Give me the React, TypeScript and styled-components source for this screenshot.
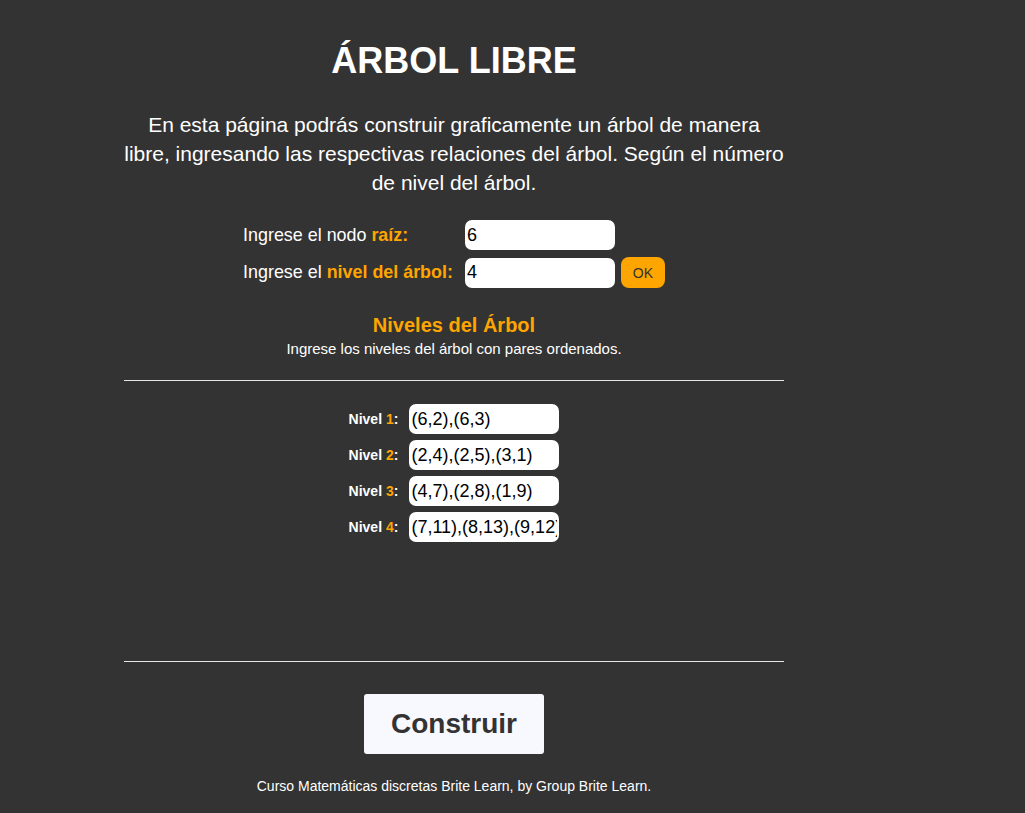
import React from 'react';
import styled, { createGlobalStyle } from 'styled-components';

const GlobalStyle = createGlobalStyle`
  html, body {
    margin: 0;
    padding: 0;
    background-color: #333333;
  }
  body {
    font-family: "Liberation Sans", Arial, sans-serif;
    color: #ffffff;
    min-height: 813px;
  }
`;

const Main = styled.main`
  width: 660px;
  margin-left: 124px;
  padding-top: 40px;
  display: flex;
  flex-direction: column;
  align-items: center;
`;

const Title = styled.h1`
  margin: 0;
  font-size: 36px;
  font-weight: bold;
  line-height: 42px;
  text-align: center;
`;

const Intro = styled.p`
  margin: 28px 0 0;
  font-size: 21px;
  line-height: 29px;
  text-align: center;
`;

const FormGrid = styled.div`
  margin-top: 23px;
  display: grid;
  grid-template-columns: auto 150px 44px;
  column-gap: 6px;
  row-gap: 7px;
  align-items: center;
`;

const Label = styled.label`
  padding-right: 6px;
  font-size: 17.9px;
`;

const Highlight = styled.span`
  color: #ffa500;
  font-weight: bold;
`;

const TextInput = styled.input`
  box-sizing: border-box;
  width: 150px;
  height: 30px;
  border: none;
  border-radius: 7px;
  padding: 0 2px;
  background: #ffffff;
  color: #000000;
  font-family: "Liberation Sans", Arial, sans-serif;
  font-size: 18px;
  outline: none;
`;

const OkButton = styled.button`
  width: 44px;
  height: 31px;
  border: none;
  border-radius: 8px;
  background: #ffa500;
  color: #333333;
  font-family: "Liberation Sans", Arial, sans-serif;
  font-size: 14px;
  cursor: pointer;
`;

const SectionTitle = styled.h2`
  margin: 25px 0 0;
  font-size: 20px;
  line-height: 24px;
  color: #ffa500;
  text-align: center;
`;

const SectionHint = styled.p`
  margin: 3px 0 0;
  font-size: 15px;
  line-height: 18px;
  text-align: center;
`;

const Rule = styled.hr`
  width: 100%;
  margin: 0;
  border: none;
  border-top: 1px solid #e6e6e6;
`;

const LevelsBlock = styled.section`
  width: 100%;
  margin-top: 22px;
  display: flex;
  flex-direction: column;
  align-items: center;
`;

const LevelsGrid = styled.div`
  height: 280px;
  box-sizing: border-box;
  padding-top: 23px;
  display: grid;
  grid-template-columns: auto 150px;
  grid-auto-rows: 30px;
  column-gap: 11px;
  row-gap: 6px;
  align-content: start;
  align-items: center;
`;

const LevelLabel = styled.label`
  font-size: 14px;
  font-weight: bold;
`;

const LevelNumber = styled.span`
  color: #ffa500;
`;

const BuildButton = styled.button`
  margin-top: 32px;
  width: 180px;
  height: 60px;
  border: none;
  border-radius: 3px;
  background: #f8f8ff;
  color: #333333;
  font-family: "Liberation Sans", Arial, sans-serif;
  font-size: 28px;
  font-weight: bold;
  cursor: pointer;
`;

const Footer = styled.footer`
  margin-top: 24px;
  font-size: 14px;
  text-align: center;
`;

const levels = [
  { n: 1, value: '(6,2),(6,3)' },
  { n: 2, value: '(2,4),(2,5),(3,1)' },
  { n: 3, value: '(4,7),(2,8),(1,9)' },
  { n: 4, value: '(7,11),(8,13),(9,12)' },
];

export default function App() {
  const [root, setRoot] = React.useState('6');
  const [depth, setDepth] = React.useState('4');
  const [values, setValues] = React.useState(levels.map(l => l.value));

  return (
    <>
      <GlobalStyle />
      <Main>
        <Title>ÁRBOL LIBRE</Title>
        <Intro>
          En esta página podrás construir graficamente un árbol de manera libre, ingresando las
          respectivas relaciones del árbol. Según el número de nivel del árbol.
        </Intro>

        <FormGrid>
          <Label htmlFor="raiz">
            Ingrese el nodo <Highlight>raíz:</Highlight>
          </Label>
          <TextInput id="raiz" value={root} onChange={e => setRoot(e.target.value)} />
          <span />
          <Label htmlFor="nivel">
            Ingrese el <Highlight>nivel del árbol:</Highlight>
          </Label>
          <TextInput id="nivel" value={depth} onChange={e => setDepth(e.target.value)} />
          <OkButton>OK</OkButton>
        </FormGrid>

        <SectionTitle>Niveles del Árbol</SectionTitle>
        <SectionHint>Ingrese los niveles del árbol con pares ordenados.</SectionHint>

        <LevelsBlock>
          <Rule />
          <LevelsGrid>
            {levels.map((level, i) => (
              <React.Fragment key={level.n}>
                <LevelLabel htmlFor={`nivel-${level.n}`}>
                  Nivel <LevelNumber>{level.n}</LevelNumber>:
                </LevelLabel>
                <TextInput
                  id={`nivel-${level.n}`}
                  value={values[i]}
                  onChange={e => {
                    const next = [...values];
                    next[i] = e.target.value;
                    setValues(next);
                  }}
                />
              </React.Fragment>
            ))}
          </LevelsGrid>
          <Rule />
        </LevelsBlock>

        <BuildButton>Construir</BuildButton>
        <Footer>Curso Matemáticas discretas Brite Learn, by Group Brite Learn.</Footer>
      </Main>
    </>
  );
}
